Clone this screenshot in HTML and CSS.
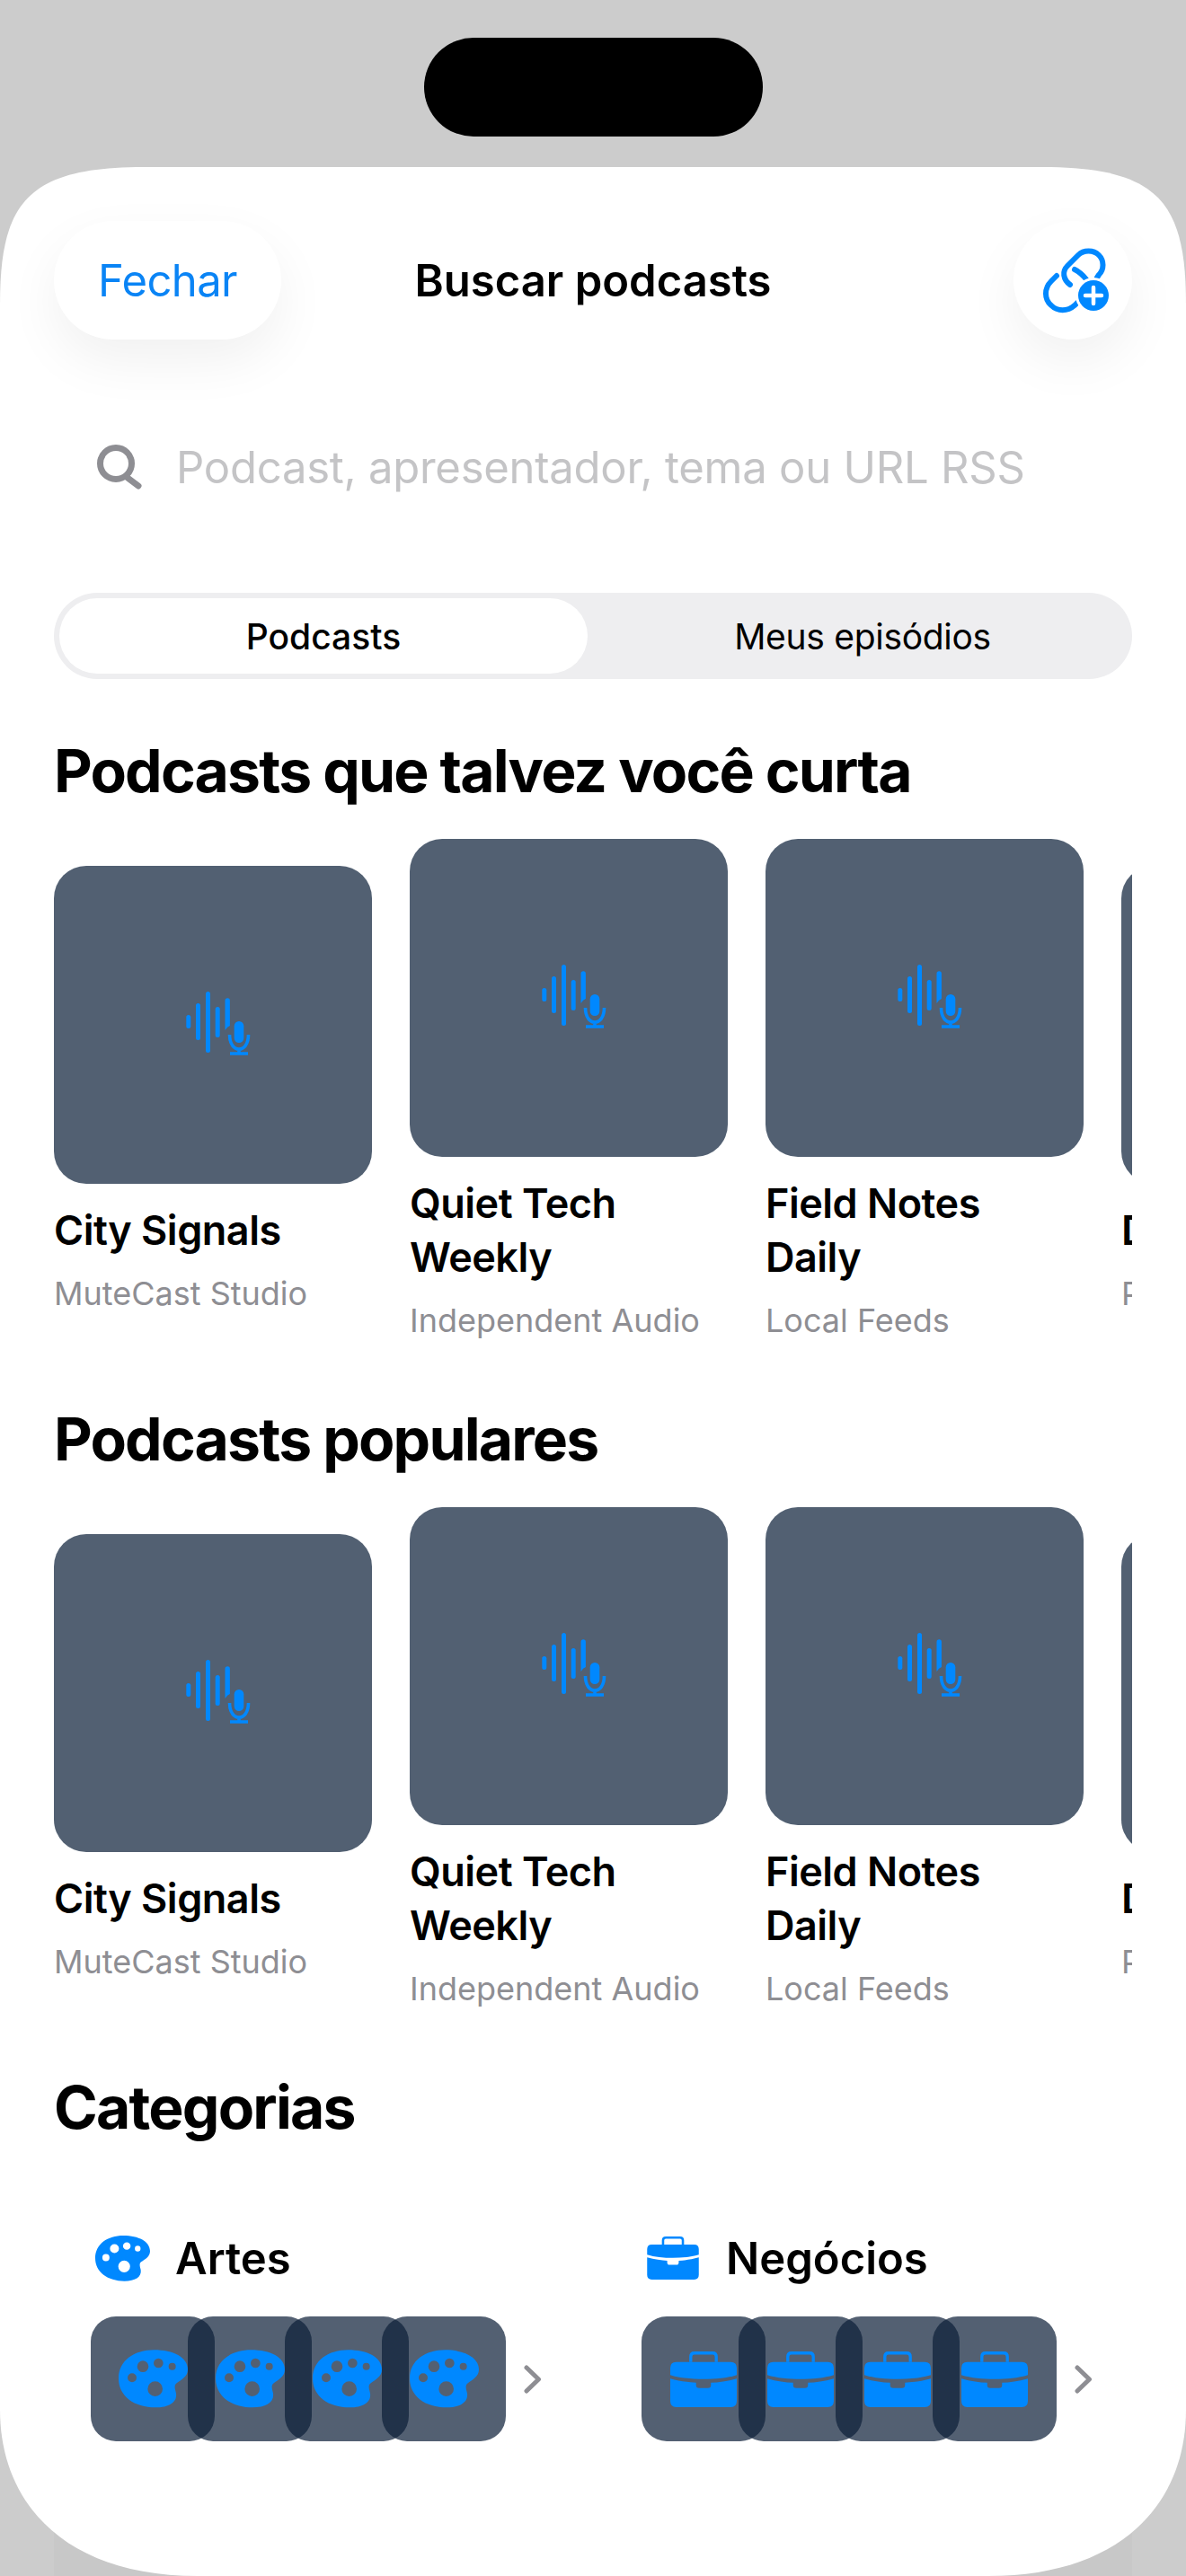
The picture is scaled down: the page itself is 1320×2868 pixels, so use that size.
FILE: index.html
```html
<!DOCTYPE html>
<html>
<head>
  <title>Buscar podcasts</title>
  <link rel="stylesheet" href="styles.css">
</head>
<body>
  <svg class="defs" width="0" height="0">
    <symbol id="wave-mic" viewBox="2 1 130 100">
      <rect x="37.3" y="40" width="5" height="15" rx="2.5"/>
      <rect x="48" y="27" width="5" height="41" rx="2.5"/>
      <rect x="59" y="14" width="5" height="68" rx="2.5"/>
      <rect x="69.7" y="31" width="5" height="34" rx="2.5"/>
      <path d="M80.5 24 a2.7 2.7 0 0 1 5.4 0 V52 q-3 1 -5.4 5 Z"/>
      <rect x="90.7" y="47" width="10.6" height="24" rx="5.3"/>
      <path d="M85.5 62 c0 21.5 21 21.5 21 0 M96 78 V83 M86 83 H106" fill="none" stroke="currentColor" stroke-width="3.6"/>
    </symbol>
    <symbol id="palette" viewBox="127 140 231 193">
      <path fill-rule="evenodd" d="M127 235 C127 175 180 140 245 140 C310 140 358 165 358 205 C358 230 335 240 322 250 C310 258 316 270 319 285 C323 315 295 332 250 332 C180 332 127 295 127 235 Z
        M157 233 a15 15 0 1 0 30 0 a15 15 0 1 0 -30 0 Z
        M189 195 a19 19 0 1 0 38 0 a19 19 0 1 0 -38 0 Z
        M244 184 a16 16 0 1 0 32 0 a16 16 0 1 0 -32 0 Z
        M294 195 a12 12 0 1 0 24 0 a12 12 0 1 0 -24 0 Z
        M224 270 a25 25 0 1 0 50 0 a25 25 0 1 0 -50 0 Z"/>
    </symbol>
    <symbol id="briefcase" viewBox="108 143 224 187">
      <path d="M108 198 Q108 178 128 178 H312 Q332 178 332 198 V222 C300 232 260 236 220 236 C180 236 140 232 108 222 Z"/>
      <path d="M108 234 C140 243 170 247 195 248 V256 Q195 266 205 266 H235 Q245 266 245 256 V248 C270 247 300 243 332 234 V310 Q332 330 312 330 H128 Q108 330 108 310 Z"/>
      <path d="M177 178 V160 Q177 148 189 148 H251 Q263 148 263 160 V178" fill="none" stroke="currentColor" stroke-width="10"/>
    </symbol>
    <symbol id="chevron" viewBox="0 0 20 32">
      <path d="M3 3 L16.5 16 L3 29" fill="none" stroke="currentColor" stroke-width="5" stroke-linecap="round" stroke-linejoin="round"/>
    </symbol>
  </svg>

  <div class="phone">
    <div class="backdrop"></div>
    <div class="island"></div>

    <div class="sheet">
      <div class="nav">
        <button class="pill-btn">Fechar</button>
        <div class="nav-title">Buscar podcasts</div>
        <button class="round-btn">
          <svg class="link-icon" viewBox="18 6 132 132">
            <g fill="none" stroke="currentColor" stroke-width="6" stroke-linecap="round" transform="translate(3 0)">
              <path d="M78 77 C70 71 69 62 75 56 L87 44 C93 38 104 38 110 44 C116 50 116 60 110 66 L108 69"/>
              <path d="M63 67 L57 73 C49 81 49 93 57 100 C64 107 75 107 83 100 L90 93"/>
              <path d="M83 60 C87 62 92 66 96 71"/>
            </g>
            <circle cx="107" cy="89" r="20" fill="#fff"/>
            <circle cx="107" cy="89" r="17" fill="currentColor"/>
            <path d="M107 80 V98 M98 89 H116" stroke="#fff" stroke-width="4.5" stroke-linecap="round"/>
          </svg>
        </button>
      </div>

      <div class="search">
        <svg class="search-icon" viewBox="108 494 50 50">
          <circle cx="129" cy="515" r="17.5" fill="none" stroke="currentColor" stroke-width="7"/>
          <path d="M142 531 L154 540" stroke="currentColor" stroke-width="7" stroke-linecap="round"/>
        </svg>
        <span class="search-text">Podcast, apresentador, tema ou URL RSS</span>
      </div>

      <div class="segments">
        <div class="segment active">Podcasts</div>
        <div class="segment">Meus episódios</div>
      </div>

      <h2 class="section-title">Podcasts que talvez você curta</h2>
      <div class="shelf">
        <div class="card">
          <div class="art"><svg class="art-icon"><use href="#wave-mic"/></svg></div>
          <div class="card-title">City Signals</div>
          <div class="card-sub">MuteCast Studio</div>
        </div>
        <div class="card">
          <div class="art"><svg class="art-icon"><use href="#wave-mic"/></svg></div>
          <div class="card-title">Quiet Tech Weekly</div>
          <div class="card-sub">Independent Audio</div>
        </div>
        <div class="card">
          <div class="art"><svg class="art-icon"><use href="#wave-mic"/></svg></div>
          <div class="card-title">Field Notes Daily</div>
          <div class="card-sub">Local Feeds</div>
        </div>
        <div class="card">
          <div class="art"><svg class="art-icon"><use href="#wave-mic"/></svg></div>
          <div class="card-title">Design Podcast</div>
          <div class="card-sub">Pod Studio</div>
        </div>
      </div>

      <h2 class="section-title">Podcasts populares</h2>
      <div class="shelf">
        <div class="card">
          <div class="art"><svg class="art-icon"><use href="#wave-mic"/></svg></div>
          <div class="card-title">City Signals</div>
          <div class="card-sub">MuteCast Studio</div>
        </div>
        <div class="card">
          <div class="art"><svg class="art-icon"><use href="#wave-mic"/></svg></div>
          <div class="card-title">Quiet Tech Weekly</div>
          <div class="card-sub">Independent Audio</div>
        </div>
        <div class="card">
          <div class="art"><svg class="art-icon"><use href="#wave-mic"/></svg></div>
          <div class="card-title">Field Notes Daily</div>
          <div class="card-sub">Local Feeds</div>
        </div>
        <div class="card">
          <div class="art"><svg class="art-icon"><use href="#wave-mic"/></svg></div>
          <div class="card-title">Design Podcast</div>
          <div class="card-sub">Pod Studio</div>
        </div>
      </div>

      <h2 class="section-title">Categorias</h2>
      <div class="categories">
        <div class="category">
          <div class="category-head">
            <span class="category-icon"><svg class="palette-sm"><use href="#palette"/></svg></span>
            <span class="category-name">Artes</span>
          </div>
          <div class="category-row">
            <div class="tiles">
              <div class="tile"><svg class="palette-lg"><use href="#palette"/></svg></div>
              <div class="tile"><svg class="palette-lg"><use href="#palette"/></svg></div>
              <div class="tile"><svg class="palette-lg"><use href="#palette"/></svg></div>
              <div class="tile"><svg class="palette-lg"><use href="#palette"/></svg></div>
            </div>
            <svg class="chevron"><use href="#chevron"/></svg>
          </div>
        </div>
        <div class="category">
          <div class="category-head">
            <span class="category-icon"><svg class="case-sm"><use href="#briefcase"/></svg></span>
            <span class="category-name">Negócios</span>
          </div>
          <div class="category-row">
            <div class="tiles">
              <div class="tile"><svg class="case-lg"><use href="#briefcase"/></svg></div>
              <div class="tile"><svg class="case-lg"><use href="#briefcase"/></svg></div>
              <div class="tile"><svg class="case-lg"><use href="#briefcase"/></svg></div>
              <div class="tile"><svg class="case-lg"><use href="#briefcase"/></svg></div>
            </div>
            <svg class="chevron"><use href="#chevron"/></svg>
          </div>
        </div>
      </div>
    </div>
  </div>
</body>
</html>
```

FILE: styles.css
```css
* {
  box-sizing: border-box;
}

body {
  margin: 0;
  font-family: Inter, "Noto Sans", sans-serif;
  background-color: #cccccc;
  color: #000000;
}

.defs {
  display: block;
  height: 0;
}

.phone {
  position: relative;
  width: 1320px;
  height: 2868px;
  padding-top: 42px;
  overflow: hidden;
}

/* faint darker band that shows under the sheet's bottom corners */
.backdrop {
  position: absolute;
  left: 60px;
  right: 60px;
  bottom: 0;
  height: 160px;
  background-color: #c8c8c8;
}

.island {
  width: 377px;
  height: 110px;
  margin: 0 auto 34px;
  background-color: #000000;
  border-radius: 55px;
}

.sheet {
  position: relative;
  height: 2682px;
  padding: 60px 60px 0;
  background-color: #ffffff;
  clip-path: path("M0 153 C0 40 30 0 160 0 H1160 C1290 0 1320 40 1320 153 V2497 C1320 2600 1249 2682 1100 2682 H220 C71 2682 0 2600 0 2497 Z");
}

/* nav */
.nav {
  display: grid;
  grid-template-columns: 1fr auto 1fr;
  align-items: center;
  height: 132px;
}

.pill-btn,
.round-btn {
  height: 132px;
  border: 0;
  background-color: #ffffff;
  color: #0a84f5;
  font-family: inherit;
  box-shadow: 0 24px 60px rgba(0, 0, 0, 0.06);
}

.pill-btn {
  width: 253px;
  border-radius: 66px;
  font-size: 49px;
  letter-spacing: -0.6px;
}

.round-btn {
  width: 132px;
  padding: 0;
  border-radius: 50%;
  justify-self: end;
  color: #0088ff;
}

.link-icon {
  display: block;
  width: 132px;
  height: 132px;
}

.nav-title {
  font-size: 49px;
  font-weight: 600;
}

/* search */
.search {
  display: flex;
  align-items: center;
  gap: 38px;
  height: 96px;
  margin-top: 94px;
  padding-left: 48px;
}

.search-icon {
  width: 50px;
  height: 50px;
  color: #8e8e93;
}

.search-text {
  font-size: 49px;
  color: #c4c4c6;
  letter-spacing: -0.25px;
  white-space: nowrap;
}

/* segmented control */
.segments {
  display: grid;
  grid-template-columns: 1fr 1fr;
  height: 96px;
  margin-top: 92px;
  background-color: #eeeef0;
  border-radius: 48px;
}

.segment {
  display: flex;
  align-items: center;
  justify-content: center;
  margin: 6px;
  border-radius: 42px;
  font-size: 39px;
  font-weight: 400;
  letter-spacing: -0.3px;
}

.segment.active {
  background-color: #ffffff;
  font-weight: 500;
  letter-spacing: 0;
}

/* shelves */
.section-title {
  height: 80px;
  margin: 62px 0 36px;
  font-size: 66px;
  font-weight: 700;
  line-height: 80px;
  letter-spacing: -1.8px;
}

.shelf + .section-title {
  margin-top: 70px;
}

.shelf {
  display: flex;
  align-items: center;
  gap: 42px;
  height: 558px;
  overflow: hidden;
}

.card {
  flex: 0 0 354px;
}

.art {
  display: flex;
  align-items: center;
  justify-content: center;
  height: 354px;
  background-color: #526072;
  border-radius: 36px;
  color: #0088ff;
}

.art-icon {
  width: 130px;
  height: 100px;
  fill: currentColor;
}

.card-title {
  margin-top: 22px;
  font-size: 45px;
  font-weight: 600;
  line-height: 60px;
  letter-spacing: -0.5px;
}

.card-sub {
  margin-top: 18px;
  font-size: 36px;
  line-height: 44px;
  color: #8e8e93;
  white-space: nowrap;
}

/* categories */
.categories {
  display: grid;
  grid-template-columns: 613px 1fr;
  padding-left: 41px;
  margin-top: 93px;
}

.category-head {
  display: flex;
  align-items: center;
  gap: 24px;
  height: 70px;
}

.category-icon {
  display: flex;
  align-items: center;
  justify-content: center;
  width: 70px;
  color: #0088ff;
}

.category-name {
  font-size: 49px;
  font-weight: 600;
}

.palette-sm {
  width: 61px;
  height: 51px;
  fill: currentColor;
}

.case-sm {
  width: 58px;
  height: 48px;
  fill: currentColor;
}

.category-row {
  display: flex;
  align-items: center;
  gap: 20px;
  margin-top: 30px;
}

.tiles {
  display: flex;
}

.tile {
  display: flex;
  align-items: center;
  justify-content: center;
  width: 138px;
  height: 139px;
  margin-right: -30px;
  background-color: rgba(13, 31, 56, 0.71);
  border-radius: 28px;
  color: #0088ff;
}

.tile:last-child {
  margin-right: 0;
}

.palette-lg {
  width: 77px;
  height: 65px;
  fill: currentColor;
}

.case-lg {
  width: 74px;
  height: 62px;
  fill: currentColor;
}

.chevron {
  width: 20px;
  height: 32px;
  color: #8e8e93;
}
```
